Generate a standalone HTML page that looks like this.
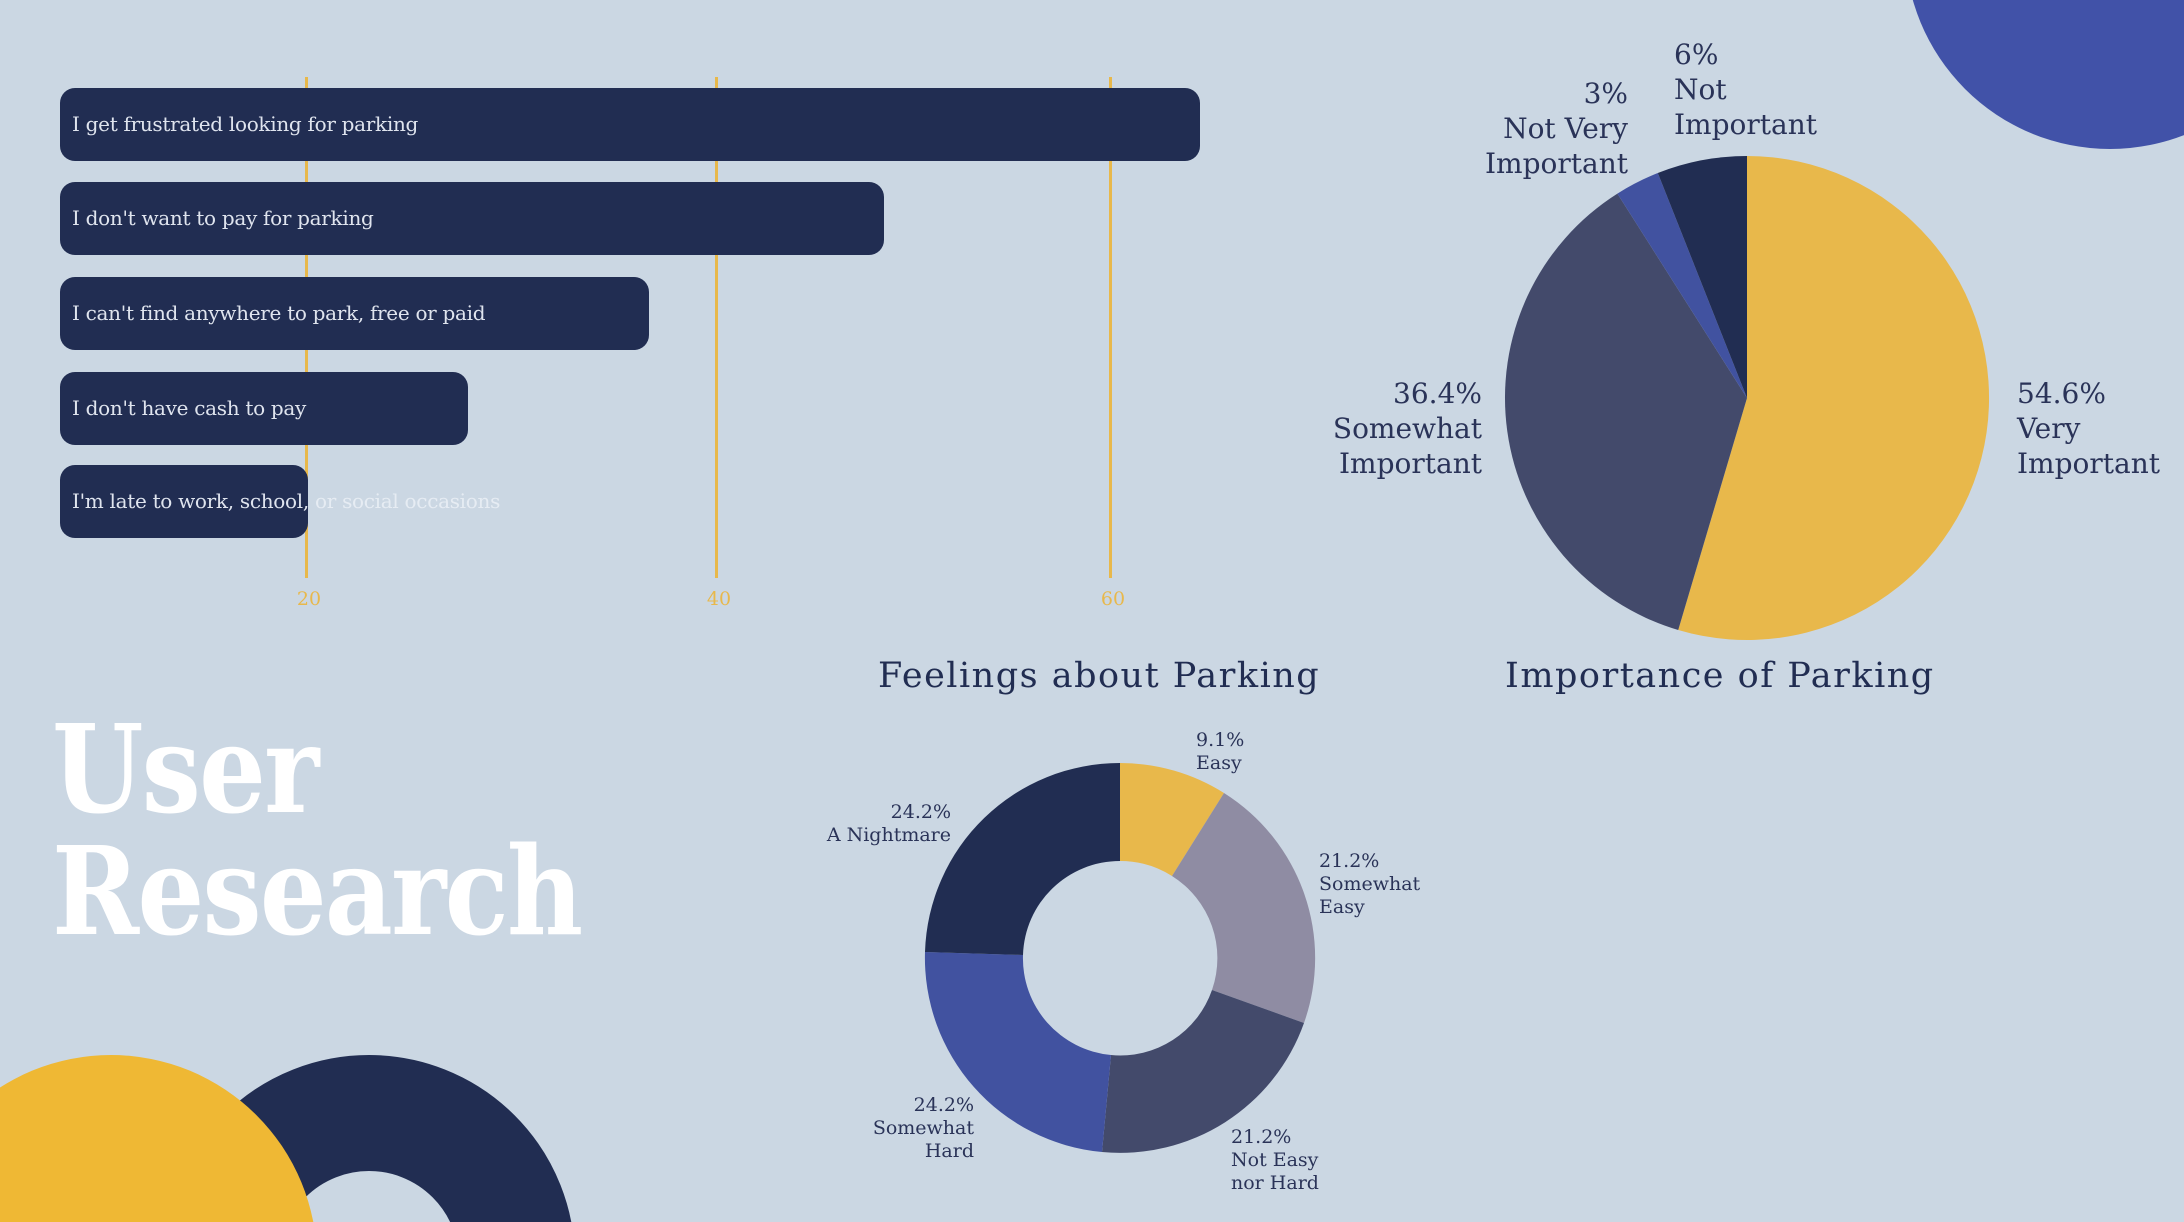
<!DOCTYPE html>
<html><head><meta charset="utf-8"><style>
html,body{margin:0;padding:0;width:2184px;height:1222px;overflow:hidden}
body{background:#cbd7e3;position:relative;font-family:"DejaVu Serif","Liberation Serif",serif}
.bar{position:absolute;left:60px;height:73px;background:#212d52;border-radius:15px;color:#dfe4ee;font-size:20px;line-height:73px;padding-left:12px;box-sizing:border-box;white-space:nowrap;letter-spacing:-0.3px}
.grid{position:absolute;top:77px;width:3px;height:501px;background:#e8b84b}
.tick{position:absolute;top:588px;color:#e8b84b;font-size:19px;width:60px;text-align:center}
.t{position:absolute;color:#2a3358;font-size:28px;line-height:35px;font-family:"DejaVu Serif",serif}
.d{position:absolute;color:#2a3358;font-size:19px;line-height:23px}
</style></head><body>
<svg width="2184" height="1222" style="position:absolute;left:0;top:0">
<circle cx="2110" cy="-56" r="205" fill="#4152a8"/>
<circle cx="369" cy="1261" r="148" fill="none" stroke="#212d52" stroke-width="116"/>
<circle cx="111" cy="1261" r="206" fill="#efb834"/>
<g transform="translate(1747,398)">
<path d="M0,0 L0,-242 A242,242 0 1,1 -68.8,232 Z" fill="#e8b84b"/>
<path d="M0,0 L-68.8,232 A242,242 0 0,1 -129.6,-204.4 Z" fill="#434a6b"/>
<path d="M0,0 L-129.6,-204.4 A242,242 0 0,1 -89.2,-225 Z" fill="#4152a0"/>
<path d="M0,0 L-89.2,-225 A242,242 0 0,1 0,-242 Z" fill="#212d52"/>
</g>
<g transform="translate(1120,958)">
<path d="M0,-195 A195,195 0 0,1 104,-165 L52,-82 A97,97 0 0,0 0,-97 Z" fill="#e8b84b"/>
<path d="M104,-165 A195,195 0 0,1 184,65 L92,32 A97,97 0 0,0 52,-82 Z" fill="#8f8ca3"/>
<path d="M184,65 A195,195 0 0,1 -18,194 L-9,97 A97,97 0 0,0 92,32 Z" fill="#434a6b"/>
<path d="M-18,194 A195,195 0 0,1 -195,-6 L-97,-3 A97,97 0 0,0 -9,97 Z" fill="#4152a0"/>
<path d="M-195,-6 A195,195 0 0,1 0,-195 L0,-97 A97,97 0 0,0 -97,-3 Z" fill="#212d52"/>
</g>
</svg>
<div class="grid" style="left:305px"></div>
<div class="grid" style="left:715px"></div>
<div class="grid" style="left:1109px"></div>
<div class="tick" style="left:279px">20</div>
<div class="tick" style="left:689px">40</div>
<div class="tick" style="left:1083px">60</div>
<div class="bar" style="top:88px;width:1140px">I get frustrated looking for parking</div>
<div class="bar" style="top:182px;width:824px">I don't want to pay for parking</div>
<div class="bar" style="top:277px;width:589px">I can't find anywhere to park, free or paid</div>
<div class="bar" style="top:372px;width:408px">I don't have cash to pay</div>
<div class="bar" style="top:465px;width:248px;overflow:visible">I'm late to work, school, <span style="color:#e6ecf3">or social occasions</span></div>
<div style="position:absolute;left:878px;top:656px;font-size:35px;color:#212d52;letter-spacing:1.5px">Feelings about Parking</div>
<div style="position:absolute;left:1505px;top:656px;font-size:35px;color:#212d52;letter-spacing:1.5px">Importance of Parking</div>
<div style="position:absolute;left:52px;top:708px;font-size:122px;line-height:122px;font-weight:bold;color:#fff;letter-spacing:-2px;transform:scaleX(0.86);transform-origin:0 0">User<br>Research</div>
<div class="t" style="left:2017px;top:376px">54.6%<br>Very<br>Important</div>
<div class="t" style="right:702px;top:376px;text-align:right">36.4%<br>Somewhat<br>Important</div>
<div class="t" style="right:556px;top:76px;text-align:right">3%<br>Not Very<br>Important</div>
<div class="t" style="left:1674px;top:37px">6%<br>Not<br>Important</div>
<div class="d" style="left:1196px;top:729px">9.1%<br>Easy</div>
<div class="d" style="left:1319px;top:850px">21.2%<br>Somewhat<br>Easy</div>
<div class="d" style="left:1231px;top:1126px">21.2%<br>Not Easy<br>nor Hard</div>
<div class="d" style="right:1210px;top:1094px;text-align:right">24.2%<br>Somewhat<br>Hard</div>
<div class="d" style="right:1233px;top:801px;text-align:right">24.2%<br>A Nightmare</div>
</body></html>
